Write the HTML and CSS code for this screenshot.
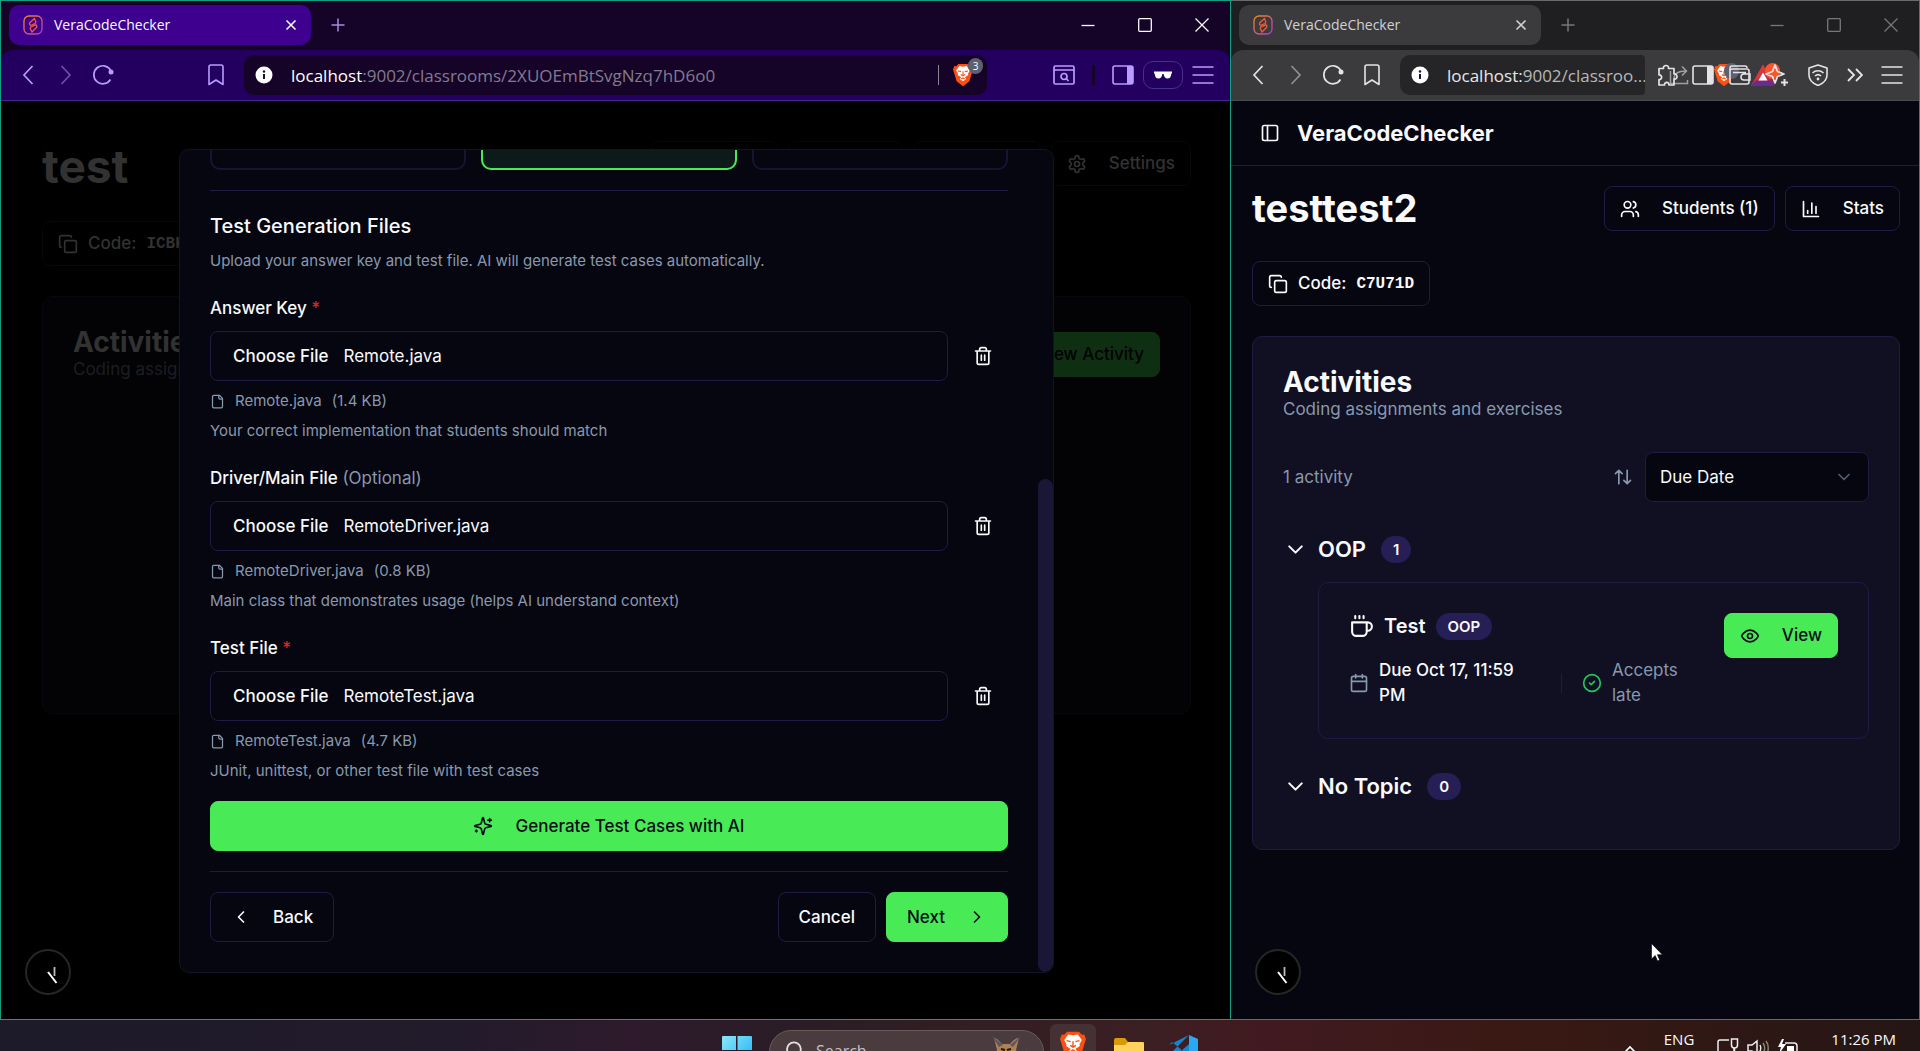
FILE: index.html
```html
<!DOCTYPE html>
<html lang="en">
<head>
<meta charset="utf-8">
<title>VeraCodeChecker</title>
<link rel="stylesheet" href="styles.css">
</head>
<body>
<svg class="sprite" aria-hidden="true">
  <defs>
    <linearGradient id="fav" x1="0" y1="0" x2="1" y2="1"><stop offset="0" stop-color="#f08a1c"/><stop offset="1" stop-color="#b33ad0"/></linearGradient>
    <linearGradient id="win" x1="0" y1="0" x2="1" y2="1"><stop offset="0" stop-color="#8be6fb"/><stop offset="1" stop-color="#18b0f2"/></linearGradient>
    <linearGradient id="bat" x1="0" y1="0" x2="1" y2="1"><stop offset="0" stop-color="#ff4724"/><stop offset="1" stop-color="#9e1f63"/></linearGradient>
  </defs>
  <symbol id="i-fav" viewBox="0 0 20 20"><rect x="1" y="1" width="18" height="18" rx="5" fill="none" stroke="url(#fav)" stroke-width="1.3"/><path d="M11.500 3.500 7 7.500c-1 1-.5 2.500.5 3L12 8.500c1-.7 1-2 .4-2.600zM9 17l4.500-4.500c.8-1 .2-2.300-.7-2.700L8 12c-1 .8-.8 2-.2 2.600z" fill="none" stroke="#ee5a3a" stroke-width="1.300"/></symbol>
  <symbol id="i-x" viewBox="0 0 12 12"><path d="m1.500 1.500 9 9m0-9-9 9" fill="none" stroke="currentColor" stroke-width="1.600"/></symbol>
  <symbol id="i-xthin" viewBox="0 0 14 14"><path d="m.5.5 13 13m0-13-13 13" fill="none" stroke="currentColor" stroke-width="1.300"/></symbol>
  <symbol id="i-plus" viewBox="0 0 14 14"><path d="M7 .5v13M.5 7h13" fill="none" stroke="currentColor" stroke-width="1.500"/></symbol>
  <symbol id="i-min" viewBox="0 0 14 14"><path d="M.5 7.500h13" fill="none" stroke="currentColor" stroke-width="1.300"/></symbol>
  <symbol id="i-max" viewBox="0 0 14 14"><rect x=".7" y=".7" width="12.600" height="12.600" rx="1" fill="none" stroke="currentColor" stroke-width="1.300"/></symbol>
  <symbol id="i-back" viewBox="0 0 12 20"><path d="M10.500 1 2 10l8.500 9" fill="none" stroke="currentColor" stroke-width="1.700"/></symbol>
  <symbol id="i-fwd" viewBox="0 0 12 20"><path d="M1.500 1 10 10l-8.500 9" fill="none" stroke="currentColor" stroke-width="1.700"/></symbol>
  <symbol id="i-reload" viewBox="0 0 22 22"><path d="M18.500 15.500A9 9 0 1 1 19 7" fill="none" stroke="currentColor" stroke-width="1.700"/><circle cx="19" cy="8" r="2.500" fill="currentColor"/></symbol>
  <symbol id="i-mark" viewBox="0 0 16 22"><path d="M1 3a2 2 0 0 1 2-2h10a2 2 0 0 1 2 2v17.500L8 16l-7 4.500z" fill="none" stroke="currentColor" stroke-width="1.600" stroke-linejoin="round"/></symbol>
  <symbol id="i-info" viewBox="0 0 18 18"><circle cx="9" cy="9" r="8.500" fill="currentColor"/><path d="M9 8v5" stroke="#1a1030" stroke-width="2"/><circle cx="9" cy="5.500" r="1.200" fill="#1a1030"/></symbol>
  <symbol id="i-brave" viewBox="0 0 22 26"><path d="M6 1h10l2.500 2.500 2-.3L22 7l-1 3-3 10-7 5.500L4 20 1 10 0 7l1.500-3.800 2 .3z" fill="#fb5014"/><path d="m11 4 4-.8L18.500 8l-2 3.500.3 1.500-3.800 2.500 1.500 2L11 20l-3.500-2.500 1.500-2L5.200 13l.3-1.500L3.500 8 7 3.200z" fill="#fff"/><path d="m5.500 8.500 3.500.8M16.500 8.500 13 9.300M11 9v5m-2.500-1.500L11 14l2.500-1.500M9 17.500l2-1.200 2 1.200" fill="none" stroke="#fb5014" stroke-width="1.200"/></symbol>
  <symbol id="i-lookup" viewBox="0 0 22 20"><rect x="1" y="1" width="20" height="18" rx="1.500" fill="none" stroke="currentColor" stroke-width="1.700"/><path d="M1 5h20" stroke="currentColor" stroke-width="1.500"/><circle cx="11" cy="11.500" r="3" fill="none" stroke="currentColor" stroke-width="1.700"/><path d="m13 13.500 2.500 2.500" stroke="currentColor" stroke-width="1.700"/></symbol>
  <symbol id="i-side" viewBox="0 0 22 20"><rect x="1" y="1" width="20" height="18" rx="2" fill="none" stroke="currentColor" stroke-width="1.600"/><path d="M15 1h6v18h-6z" fill="currentColor"/></symbol>
  <symbol id="i-glasses" viewBox="0 0 20 8"><path d="M0 0h20v2l-.8.500C19 6 17.500 8 15 8c-2.500 0-4-2-4.300-5H9.300C9 6 7.500 8 5 8 2.500 8 1 6 .8 2.500L0 2z" fill="#fff"/></symbol>
  <symbol id="i-menu" viewBox="0 0 22 18"><path d="M.5 1h21m-21 8h21m-21 8h21" stroke="currentColor" stroke-width="1.700"/></symbol>
  <symbol id="i-puzzle" viewBox="0 0 22 22"><path d="M2 4.500h4.500C5.500.5 12.500.5 11.500 4.500H17v5.500c4-1 4 6 0 5v6h-5c.5-3.500-5-3.500-4.500 0H2v-5.500c3.500.5 3.500-5 0-4.500z" fill="none" stroke="currentColor" stroke-width="1.700" stroke-linejoin="round"/></symbol>
  <symbol id="i-share" viewBox="0 0 20 20"><path d="M1.500 6v12.500h17V15M5 14c0-6 4-8 12-8m-4-4.500L17.500 6 13 10.500" fill="none" stroke="currentColor" stroke-width="1.500"/></symbol>
  <symbol id="i-wallet" viewBox="0 0 22 20"><rect x="1" y="4" width="19" height="15" rx="2" fill="none" stroke="currentColor" stroke-width="1.600"/><path d="M1 5V3a2 2 0 0 1 2-2h13a2 2 0 0 1 2 2M4 7.500h13M21 9h-6a3 3 0 0 0 0 6h6z" fill="none" stroke="currentColor" stroke-width="1.500"/></symbol>
  <symbol id="i-bat" viewBox="0 0 24 21"><path d="M12 0 24 21H0z" fill="url(#bat)"/><path d="M0 21h24l-4.500-5h-15z" fill="#662d91"/><path d="m12 8 4.500 8h-9z" fill="#fff"/></symbol>
  <symbol id="i-leo" viewBox="0 0 24 24"><path d="m10 2 2.500 6.500L19 11l-6.500 2.500L10 20l-2.500-6.500L1 11l6.500-2.500z" fill="none" stroke="currentColor" stroke-width="1.800" stroke-linejoin="round"/><path d="M19.500 16v7M16 19.500h7" stroke="currentColor" stroke-width="2"/></symbol>
  <symbol id="i-vpn" viewBox="0 0 20 22"><path d="m10 1 9 3v7c0 5-4 8.500-9 10.500C5 19.500 1 16 1 11V4z" fill="none" stroke="currentColor" stroke-width="1.600" stroke-linejoin="round"/><path d="M4.500 9c3-3 8-3 11 0M7 12c2-1.800 4-1.800 6 0" fill="none" stroke="currentColor" stroke-width="1.500"/><circle cx="10" cy="15" r="1.400" fill="currentColor"/></symbol>
  <symbol id="i-more" viewBox="0 0 16 14"><path d="m1 1 6 6-6 6M9 1l6 6-6 6" fill="none" stroke="currentColor" stroke-width="1.800"/></symbol>
  <symbol id="i-copy" viewBox="0 0 24 24"><rect width="14" height="14" x="8" y="8" rx="2"/><path d="M4 16c-1.100 0-2-.9-2-2V4c0-1.100.9-2 2-2h10c1.100 0 2 .9 2 2"/></symbol>
  <symbol id="i-gear" viewBox="0 0 24 24"><path d="M12.220 2h-.44a2 2 0 0 0-2 2v.18a2 2 0 0 1-1 1.730l-.43.25a2 2 0 0 1-2 0l-.15-.08a2 2 0 0 0-2.730.73l-.22.38a2 2 0 0 0 .73 2.730l.15.1a2 2 0 0 1 1 1.720v.51a2 2 0 0 1-1 1.740l-.15.09a2 2 0 0 0-.73 2.730l.22.38a2 2 0 0 0 2.730.73l.15-.08a2 2 0 0 1 2 0l.43.25a2 2 0 0 1 1 1.730V20a2 2 0 0 0 2 2h.44a2 2 0 0 0 2-2v-.18a2 2 0 0 1 1-1.730l.43-.25a2 2 0 0 1 2 0l.15.08a2 2 0 0 0 2.730-.73l.22-.39a2 2 0 0 0-.73-2.730l-.15-.08a2 2 0 0 1-1-1.740v-.5a2 2 0 0 1 1-1.740l.15-.09a2 2 0 0 0 .73-2.730l-.22-.38a2 2 0 0 0-2.730-.73l-.15.08a2 2 0 0 1-2 0l-.43-.25a2 2 0 0 1-1-1.730V4a2 2 0 0 0-2-2z"/><circle cx="12" cy="12" r="3"/></symbol>
  <symbol id="i-trash" viewBox="0 0 24 24"><path d="M3 6h18M19 6v14c0 1-1 2-2 2H7c-1 0-2-1-2-2V6M8 6V4c0-1 1-2 2-2h4c1 0 2 1 2 2v2M10 11v6M14 11v6"/></symbol>
  <symbol id="i-file" viewBox="0 0 24 24"><path d="M15 2H6a2 2 0 0 0-2 2v16a2 2 0 0 0 2 2h12a2 2 0 0 0 2-2V7Z"/><path d="M14 2v4a2 2 0 0 0 2 2h4"/></symbol>
  <symbol id="i-sparkles" viewBox="0 0 24 24"><path d="M9.937 15.500A2 2 0 0 0 8.500 14.063l-6.135-1.582a.5.5 0 0 1 0-.962L8.500 9.936A2 2 0 0 0 9.937 8.500l1.582-6.135a.5.5 0 0 1 .963 0L14.063 8.500A2 2 0 0 0 15.500 9.937l6.135 1.581a.5.5 0 0 1 0 .964L15.500 14.063a2 2 0 0 0-1.437 1.437l-1.582 6.135a.5.5 0 0 1-.963 0z"/><path d="M20 3v4M22 5h-4M4 17v2M5 18H3"/></symbol>
  <symbol id="i-left" viewBox="0 0 24 24"><path d="m15 18-6-6 6-6"/></symbol>
  <symbol id="i-right" viewBox="0 0 24 24"><path d="m9 18 6-6-6-6"/></symbol>
  <symbol id="i-down" viewBox="0 0 24 24"><path d="m6 9 6 6 6-6"/></symbol>
  <symbol id="i-panel" viewBox="0 0 24 24"><rect width="18" height="18" x="3" y="3" rx="2"/><path d="M9 3v18"/></symbol>
  <symbol id="i-users" viewBox="0 0 24 24"><path d="M16 21v-2a4 4 0 0 0-4-4H6a4 4 0 0 0-4 4v2"/><circle cx="9" cy="7" r="4"/><path d="M22 21v-2a4 4 0 0 0-3-3.870M16 3.130a4 4 0 0 1 0 7.750"/></symbol>
  <symbol id="i-chart" viewBox="0 0 24 24"><path d="M3 3v18h18M18 17V9M13 17V5M8 17v-3"/></symbol>
  <symbol id="i-sort" viewBox="0 0 24 24"><path d="m21 16-4 4-4-4M17 20V4M3 8l4-4 4 4M7 4v16"/></symbol>
  <symbol id="i-cup" viewBox="0 0 24 24"><path d="M17 8h1a4 4 0 1 1 0 8h-1M3 8h14v9a4 4 0 0 1-4 4H7a4 4 0 0 1-4-4ZM6 2v2M10 2v2M14 2v2"/></symbol>
  <symbol id="i-eye" viewBox="0 0 24 24"><path d="M2 12s3-7 10-7 10 7 10 7-3 7-10 7-10-7-10-7Z"/><circle cx="12" cy="12" r="3"/></symbol>
  <symbol id="i-cal" viewBox="0 0 24 24"><path d="M8 2v4M16 2v4"/><rect width="18" height="18" x="3" y="4" rx="2"/><path d="M3 10h18"/></symbol>
  <symbol id="i-ok" viewBox="0 0 24 24"><circle cx="12" cy="12" r="10"/><path d="m9 12 2 2 4-4"/></symbol>
  <symbol id="i-next" viewBox="0 0 46 46"><circle cx="23" cy="23" r="22" fill="#000" stroke="#262626" stroke-width="2"/><path d="m23 23 8.500 11" stroke="#fff" stroke-width="2"/><path d="M29.500 18v9" stroke="#bbb" stroke-width="1.800"/></symbol>
</svg>

<main class="desktop">
  <section class="window window-active">
    <header class="tabs">
      <div class="tab"><svg class="fav"><use href="#i-fav"/></svg><span>VeraCodeChecker</span><button class="ic tab-x" aria-label="Close tab"><svg class="s12"><use href="#i-x"/></svg></button></div>
      <button class="ic new-tab" aria-label="New tab"><svg class="s14"><use href="#i-plus"/></svg></button>
      <div class="controls">
        <button class="ic" aria-label="Minimize"><svg class="s14"><use href="#i-min"/></svg></button>
        <button class="ic" aria-label="Maximize"><svg class="s14"><use href="#i-max"/></svg></button>
        <button class="ic" aria-label="Close"><svg class="s14"><use href="#i-xthin"/></svg></button>
      </div>
    </header>
    <nav class="toolbar">
      <div class="nav-keys">
        <button class="ic" aria-label="Back"><svg class="arrow"><use href="#i-back"/></svg></button>
        <button class="ic faded" aria-label="Forward"><svg class="arrow"><use href="#i-fwd"/></svg></button>
      </div>
      <button class="ic" aria-label="Reload"><svg class="s22"><use href="#i-reload"/></svg></button>
      <button class="ic mark" aria-label="Bookmark"><svg class="s22"><use href="#i-mark"/></svg></button>
      <div class="url">
        <svg class="s18"><use href="#i-info"/></svg>
        <p><b>localhost</b>:9002/classrooms/2XUOEmBtSvgNzq7hD6o0</p>
        <span class="url-sep"></span>
        <span class="shield"><svg class="brave"><use href="#i-brave"/></svg><span class="count">3</span></span>
      </div>
      <div class="tools">
        <button class="ic" aria-label="Find in page"><svg class="s22"><use href="#i-lookup"/></svg></button>
        <span class="bar"></span>
        <button class="ic" aria-label="Side panel"><svg class="s22"><use href="#i-side"/></svg></button>
        <button class="ic private" aria-label="Private window"><svg class="glasses"><use href="#i-glasses"/></svg></button>
        <button class="ic" aria-label="Menu"><svg class="s22"><use href="#i-menu"/></svg></button>
      </div>
    </nav>
    <div class="page">
      <div class="behind">
        <div class="head">
          <h1 class="name-lg">test</h1>
          <div class="actions">
            <button class="btn ghost-a" aria-label="Students"></button>
            <button class="btn ghost-b" aria-label="Stats"></button>
            <button class="btn ghost-c" aria-label="Export"></button>
            <button class="btn"><svg class="lu"><use href="#i-gear"/></svg>Settings</button>
          </div>
        </div>
        <button class="btn code"><svg class="lu"><use href="#i-copy"/></svg>Code: <code>ICBK2F</code></button>
        <div class="panel">
          <div><h2>Activities</h2><p class="sub">Coding assignments</p></div>
          <button class="btn dim-green">New Activity</button>
        </div>
      </div>
      <div class="overlay">
        <div class="modal" role="dialog" aria-label="Test Generation Files">
          <div class="choices"><div class="choice"></div><div class="choice chosen"></div><div class="choice"></div></div>
          <hr>
          <h3>Test Generation Files</h3>
          <p class="note lead">Upload your answer key and test file. AI will generate test cases automatically.</p>
          <div class="field">
            <label for="f1">Answer Key <em>*</em></label>
            <div class="pick"><button id="f1" class="file"><span>Choose File</span>Remote.java</button><button class="ic bin" aria-label="Remove Remote.java"><svg class="lu"><use href="#i-trash"/></svg></button></div>
            <p class="note row"><svg class="lu-sm"><use href="#i-file"/></svg>Remote.java<span>(1.4 KB)</span></p>
            <p class="note">Your correct implementation that students should match</p>
          </div>
          <div class="field">
            <label for="f2">Driver/Main File <i>(Optional)</i></label>
            <div class="pick"><button id="f2" class="file"><span>Choose File</span>RemoteDriver.java</button><button class="ic bin" aria-label="Remove RemoteDriver.java"><svg class="lu"><use href="#i-trash"/></svg></button></div>
            <p class="note row"><svg class="lu-sm"><use href="#i-file"/></svg>RemoteDriver.java<span>(0.8 KB)</span></p>
            <p class="note">Main class that demonstrates usage (helps AI understand context)</p>
          </div>
          <div class="field">
            <label for="f3">Test File <em>*</em></label>
            <div class="pick"><button id="f3" class="file"><span>Choose File</span>RemoteTest.java</button><button class="ic bin" aria-label="Remove RemoteTest.java"><svg class="lu"><use href="#i-trash"/></svg></button></div>
            <p class="note row"><svg class="lu-sm"><use href="#i-file"/></svg>RemoteTest.java<span>(4.7 KB)</span></p>
            <p class="note">JUnit, unittest, or other test file with test cases</p>
          </div>
          <button class="btn tall green wide"><svg class="lu"><use href="#i-sparkles"/></svg>Generate Test Cases with AI</button>
          <hr>
          <div class="foot">
            <button class="btn tall"><svg class="lu"><use href="#i-left"/></svg>Back</button>
            <span class="grow"></span>
            <button class="btn tall">Cancel</button>
            <button class="btn tall green">Next<svg class="lu"><use href="#i-right"/></svg></button>
          </div>
          <span class="thumb"></span>
        </div>
      </div>
      <svg class="next"><use href="#i-next"/></svg>
    </div>
  </section>

  <section class="window window-idle">
    <header class="tabs">
      <div class="tab"><svg class="fav"><use href="#i-fav"/></svg><span>VeraCodeChecker</span><button class="ic tab-x" aria-label="Close tab"><svg class="s12"><use href="#i-x"/></svg></button></div>
      <button class="ic new-tab" aria-label="New tab"><svg class="s14"><use href="#i-plus"/></svg></button>
      <div class="controls">
        <button class="ic" aria-label="Minimize"><svg class="s14"><use href="#i-min"/></svg></button>
        <button class="ic" aria-label="Maximize"><svg class="s14"><use href="#i-max"/></svg></button>
        <button class="ic" aria-label="Close"><svg class="s14"><use href="#i-xthin"/></svg></button>
      </div>
    </header>
    <nav class="toolbar">
      <div class="nav-keys">
        <button class="ic" aria-label="Back"><svg class="arrow"><use href="#i-back"/></svg></button>
        <button class="ic faded" aria-label="Forward"><svg class="arrow"><use href="#i-fwd"/></svg></button>
      </div>
      <button class="ic" aria-label="Reload"><svg class="s22"><use href="#i-reload"/></svg></button>
      <button class="ic mark" aria-label="Bookmark"><svg class="s22"><use href="#i-mark"/></svg></button>
      <div class="url">
        <svg class="s18"><use href="#i-info"/></svg>
        <p><b>localhost:</b>9002/classroo...</p>
      </div>
      <div class="tools crowded">
        <svg class="s22"><use href="#i-puzzle"/></svg>
        <svg class="s20 over dim"><use href="#i-share"/></svg>
        <svg class="s22"><use href="#i-side"/></svg>
        <svg class="brave"><use href="#i-brave"/></svg>
        <span class="dot over"></span>
        <svg class="s22 over"><use href="#i-wallet"/></svg>
        <svg class="s24"><use href="#i-bat"/></svg>
        <span class="dot red over"></span>
        <svg class="s24 on-dot"><use href="#i-leo"/></svg>
        <svg class="s22 apart"><use href="#i-vpn"/></svg>
        <svg class="s16 apart"><use href="#i-more"/></svg>
        <svg class="s22 apart"><use href="#i-menu"/></svg>
      </div>
    </nav>
    <div class="page">
      <div class="appbar"><svg class="lu"><use href="#i-panel"/></svg><strong>VeraCodeChecker</strong></div>
      <div class="content">
        <div class="head">
          <h1>testtest2</h1>
          <div class="actions">
            <button class="btn"><svg class="lu"><use href="#i-users"/></svg>Students (1)</button>
            <button class="btn"><svg class="lu"><use href="#i-chart"/></svg>Stats</button>
          </div>
        </div>
        <button class="btn code"><svg class="lu"><use href="#i-copy"/></svg>Code: <code>C7U71D</code></button>
        <div class="card">
          <h2>Activities</h2>
          <p class="sub">Coding assignments and exercises</p>
          <div class="filter">
            <span>1 activity</span>
            <label for="sort" aria-label="Sort by"><svg class="lu"><use href="#i-sort"/></svg></label>
            <span class="select"><select id="sort"><option>Due Date</option></select><svg class="lu"><use href="#i-down"/></svg></span>
          </div>
          <div class="topic"><svg class="lu-lg"><use href="#i-down"/></svg><h3>OOP</h3><span class="badge">1</span></div>
          <article class="activity">
            <div class="info">
              <div class="title"><svg class="lu-lg"><use href="#i-cup"/></svg><h4>Test</h4><span class="badge">OOP</span></div>
              <div class="meta"><svg class="lu"><use href="#i-cal"/></svg><p class="due">Due Oct 17, 11:59 PM</p><span class="rule"></span><svg class="lu ok"><use href="#i-ok"/></svg><p class="late">Accepts late</p></div>
            </div>
            <button class="btn green"><svg class="lu"><use href="#i-eye"/></svg>View</button>
          </article>
          <div class="topic last"><svg class="lu-lg"><use href="#i-down"/></svg><h3>No Topic</h3><span class="badge">0</span></div>
        </div>
      </div>
      <svg class="next"><use href="#i-next"/></svg>
      <svg class="pointer" viewBox="0 0 12 19"><path d="M.5.5v15.500l3.700-3.500 2.300 5.500 2.200-1-2.300-5.300h5z" fill="#fff" stroke="#000" stroke-width=".6"/></svg>
    </div>
  </section>
</main>

<footer class="taskbar">
  <div class="apps">
    <svg class="start" viewBox="0 0 30 30"><path d="M0 1a1 1 0 0 1 1-1h13v14H0zM15.500 0H29a1 1 0 0 1 1 1v13H15.500zM0 15.500h14V30H0zM15.500 15.500H30V30H15.500z" fill="url(#win)"/></svg>
    <label class="search"><svg viewBox="0 0 24 24" class="s22"><circle cx="13" cy="10" r="7.500" fill="none" stroke="#e6e0e0" stroke-width="2"/><path d="m8 16-4 5" stroke="#e6e0e0" stroke-width="2"/></svg><input placeholder="Search" aria-label="Search">
      <svg class="lynx" viewBox="0 0 54 34"><path d="m3 34-2-16 6 16M8 34l1-10 3 10M42 34l6-18-2 18M50 34l3-14" stroke="#7d7a3a" stroke-width="1.500" fill="none"/><path d="M15 3c3 0 6 4 8 6h8c2-2 5-6 9-6l-3 12 3 10-3 5H18l-3-6 3-9z" fill="#b08050"/><path d="m13 1 7 11 4-2zM42 1l-8 11-3-2z" fill="#5a5668"/><path d="m22 14 4 1M32 14l-4 1" stroke="#22150c" stroke-width="2"/><path d="M23 19h8l-2 6h-4z" fill="#ead9c6"/></svg>
    </label>
    <span class="tile"><svg class="big"><use href="#i-brave"/></svg></span>
    <svg class="folder" viewBox="0 0 30 26"><path d="M0 3a2 2 0 0 1 2-2h9l3 4h16v10H0z" fill="#d99a07"/><path d="M0 8h11l3-3h14a2 2 0 0 1 2 2v19H0z" fill="#ffd35c"/></svg>
    <svg class="code-app" viewBox="0 0 30 30"><path d="m1 10 3-3 17 14V9L5 23l-4-3L21 0z" fill="#1484cc"/><path d="m21 0 9 4v22l-9 4z" fill="#29a9f2"/></svg>
  </div>
  <div class="tray">
    <svg class="up" viewBox="0 0 12 8"><path d="m1 7 5-5 5 5" fill="none" stroke="#fff" stroke-width="1.600"/></svg>
    <span class="lang">ENG</span>
    <svg class="s22" viewBox="0 0 22 22"><path d="M12 3H3a2 2 0 0 0-2 2v9a2 2 0 0 0 2 2h14v-5M6 20h9" fill="none" stroke="#eee" stroke-width="1.500"/><path d="M14.500 2h6v6a3 3 0 0 1-6 0zM17.500 11v4" fill="none" stroke="#eee" stroke-width="1.500"/></svg>
    <svg class="s22" viewBox="0 0 22 22"><path d="M1 8h4l5-4v14l-5-4H1z" fill="none" stroke="#eee" stroke-width="1.500"/><path d="M13 8c1 2 1 4 0 6" stroke="#eee" fill="none" stroke-width="1.400"/><path d="M16 6c2 3 2 7 0 10m3-12c3 4 3 10 0 14" stroke="#887" fill="none" stroke-width="1.400"/></svg>
    <svg class="s22" viewBox="0 0 22 22"><path d="M8 6h9a3 3 0 0 1 3 3v4a3 3 0 0 1-3 3H8" fill="none" stroke="#eee" stroke-width="1.500"/><path d="M10 9h7v5h-7zM5 2 1 10h3l-2 7 7-10H5l2-5z" fill="#fff"/></svg>
    <time>11:26 PM</time>
  </div>
</footer>
</body>
</html>
```
FILE: styles.css
```css
* { box-sizing: border-box; }
html, body { height: 100%; }
body {
  margin: 0;
  display: flex;
  flex-direction: column;
  overflow: hidden;
  background: #000;
  color: #f8fafc;
  font: 17px/25px Inter, "Liberation Sans", sans-serif;
}
h1, h2, h3, h4, p { margin: 0; }
button, input, select { font: inherit; color: inherit; margin: 0; }
svg { flex: none; display: block; }
.sprite { position: absolute; width: 0; height: 0; }

.lu, .lu-sm, .lu-lg { width: 20px; height: 20px; fill: none; stroke: currentColor; stroke-width: 2; stroke-linecap: round; stroke-linejoin: round; }
.lu-sm { width: 15px; height: 15px; }
.lu-lg { width: 25px; height: 25px; }
.s12 { width: 12px; height: 12px; }
.s14 { width: 14px; height: 14px; }
.s16 { width: 16px; height: 16px; }
.s18 { width: 18px; height: 18px; }
.s20 { width: 20px; height: 20px; }
.s22 { width: 22px; height: 22px; }
.s24 { width: 24px; height: 24px; }
.arrow { width: 12px; height: 20px; }
.brave { width: 20px; height: 24px; }
.ic { border: 0; padding: 0; background: none; display: grid; place-items: center; }

/* windows */
.desktop { flex: 1; min-height: 0; display: grid; grid-template-columns: 1231fr 689fr; }
.window { display: flex; flex-direction: column; min-width: 0; border: 1px solid #6a6a6a; }
.window-active { border-color: #12a083; background: #150427; color: #f8fafc; }
.window-idle { border-left: 0; background: #1f1f21; }
.tabs { height: 49px; display: flex; align-items: center; padding: 0 0 2px 8px; font: 14px/20px "Open Sans", "Noto Sans", sans-serif; }
.tab { width: 302px; height: 40px; border-radius: 10px; display: flex; align-items: center; gap: 11px; padding: 0 14px; background: #3d008f; }
.tab-x { margin-left: auto; }
.fav { width: 20px; height: 20px; }
.new-tab { margin-left: 20px; color: #a78be0; }
.controls { margin-left: auto; display: flex; gap: 43px; padding-right: 21px; }
.window-idle .tab { background: #3b3b3e; color: #d0d0d2; }
.window-idle .new-tab, .window-idle .controls { color: #77777a; }
.toolbar { height: 51px; display: flex; align-items: center; padding: 0 16px 0 21px; background: #23005f; border-bottom: 1px solid #4a2590; border-radius: 12px 12px 0 0; color: #b89cff; gap: 20px; font-family: "Open Sans", "Noto Sans", sans-serif; }
.nav-keys { display: flex; gap: 26px; }
.faded { opacity: .5; }
.toolbar .mark { margin-left: 74px; }
.mark svg { width: 16px; }
.url { flex: 1; min-width: 0; height: 40px; background: #150427; border-radius: 10px; display: flex; align-items: center; gap: 18px; padding: 0 2px 0 11px; color: #fff; }
.url p { flex: 1; min-width: 0; color: #837a90; white-space: nowrap; overflow: hidden; }
.url b { color: #fff; font-weight: 400; }
.url-sep { width: 1px; height: 20px; background: #8a8494; }
.shield { position: relative; width: 32px; margin-left: -4px; }
.count { position: absolute; right: 2px; top: -5px; width: 15px; height: 16px; border-radius: 8px; background: #5c6070; font-size: 10px; line-height: 16px; text-align: center; }
.tools { display: flex; align-items: center; gap: 17px; padding-left: 46px; }
.tools .bar { width: 3px; height: 20px; background: #150427; }
.private { width: 40px; height: 28px; border: 1px solid #45308a; border-radius: 10px; margin: 0 -8px; }
.glasses { width: 18px; height: 8px; }
.window-idle .toolbar { background: #3b3b3e; border-color: #4a4a4d; color: #e4e4e6; }
.window-idle .toolbar .mark { margin-left: 0; }
.window-idle .url { background: #252528; padding-right: 0; border-radius: 10px 4px 4px 10px; }
.window-idle .url p { color: #b8b8ba; }
.window-idle .url b { color: #e8e8ea; }
.tools.crowded { gap: 0; padding-left: 0; margin-left: -8px; }
.crowded .over { margin-left: -10px; }
.crowded .on-dot { margin-left: -15px; }
.crowded .apart { margin-left: 18px; }
.crowded .dim { opacity: .6; margin-right: 3px; }
.dot { flex: none; width: 15px; height: 16px; border-radius: 8px; background: #5c6070; align-self: flex-start; }
.dot.red { background: #fb542b; }

/* page shared */
.page { position: relative; flex: 1; min-height: 0; background: #060610; overflow: hidden; }
.head { display: flex; align-items: flex-start; justify-content: space-between; }
.actions { display: flex; gap: 10px; }
h1 { font-size: 38px; line-height: 45px; font-weight: 700; }
h2 { font-size: 28px; line-height: 30px; font-weight: 700; }
.btn { height: 45px; padding: 0 15px; display: flex; align-items: center; justify-content: center; gap: 22px; border: 1px solid #1f1b42; border-radius: 8px; background: none; font-weight: 500; white-space: nowrap; }
.btn.tall { height: 50px; padding: 0 20px; }
.btn.green { background: #48eb56; border-color: #48eb56; color: #0b0b1a; }
.btn.code { gap: 10px; padding: 0 15px; }
code { font: 700 16px/20px "Liberation Mono", monospace; }
.sub { color: #8899ae; line-height: 25px; }
.next { position: absolute; left: 24px; bottom: 24px; width: 46px; height: 46px; }
.window-active .page { background: #000; }

/* dimmed page under the dialog */
.behind { padding: 40px 39px 0 41px; color: #323232; }
.behind .btn { border-color: #07070d; }
.behind .btn.code { margin-top: 30px; }
.name-lg { font-size: 46px; line-height: 50px; }
.ghost-a { width: 127px; }
.ghost-b { width: 115px; }
.ghost-c { width: 128px; }
.panel { margin-top: 30px; height: 418px; border: 1px solid #07070d; border-radius: 10px; background: #030305; display: flex; justify-content: space-between; align-items: flex-start; padding: 30px; }
.panel .sub { color: #1b1e23; }
.behind .dim-green { background: #0e2f12; border-color: #0e2f12; color: #020204; margin-top: 5px; }

.overlay { position: absolute; inset: 0; display: grid; place-items: center; padding: 2px 0 0 2px; }
.modal { position: relative; width: 100%; max-width: 875px; height: 90%; border: 1px solid #141226; border-radius: 10px; background: #060610; overflow: hidden; display: flex; flex-direction: column; justify-content: flex-end; padding: 30px 45px 30px 30px; }
.modal > * { flex: none; }
.choices { display: grid; grid-template-columns: repeat(3, 1fr); gap: 15px; }
.choice { height: 120px; border: 2px solid #171432; border-radius: 10px; }
.chosen { border-color: #48eb56; background: #0c1b1a; }
hr { width: 100%; height: 1px; margin: 20px 0; border: 0; background: #1f1b42; }
.modal h3 { font-size: 20px; line-height: 30px; font-weight: 500; }
.note { font-size: 15px; line-height: 20px; color: #8899ae; }
.lead { margin-top: 10px; }
.row { display: flex; align-items: center; gap: 10px; }
.field { margin-top: 25px; display: flex; flex-direction: column; gap: 10px; }
label { font-weight: 500; }
label em { color: #dc2626; font-style: normal; }
label i { color: #8899ae; font-style: normal; font-weight: 400; }
.pick { display: flex; align-items: center; gap: 10px; }
.file { flex: 1; height: 50px; text-align: left; border: 1px solid #1f1b42; border-radius: 8px; background: none; padding: 0 22px; display: flex; align-items: center; gap: 15px; }
.file span { font-weight: 500; }
.bin { width: 50px; height: 50px; }
.wide { margin-top: 20px; }
.foot { display: flex; gap: 10px; }
.grow { flex: 1; }
.thumb { position: absolute; right: 0; bottom: 0; width: 15px; height: 60%; border-radius: 8px; background: #1a1736; }

/* idle window content */
.appbar { height: 65px; border-bottom: 1px solid #1f1b42; display: flex; align-items: center; gap: 17px; padding-left: 29px; }
.appbar strong { font-size: 22px; font-weight: 700; }
.content { padding: 20px 19px 0 21px; }
.content .code { margin-top: 30px; }
.card { margin-top: 30px; border: 1px solid #1f1b42; border-radius: 10px; background: #110f22; padding: 30px; }
.filter { display: flex; align-items: center; margin-top: 30px; gap: 12px; color: #8899ae; }
.filter > span:first-child { flex: 1; }
.select { position: relative; width: 224px; }
.select select { appearance: none; width: 100%; height: 50px; padding: 0 14px; border: 1px solid #1f1b42; border-radius: 8px; background: #060610; color: #f8fafc; }
.select .lu { position: absolute; right: 15px; top: 15px; opacity: .6; }
.topic { display: flex; align-items: center; gap: 10px; margin-top: 30px; height: 35px; }
.topic h3 { font-size: 22px; font-weight: 600; }
.badge { margin-left: 5px; background: #251f55; border-radius: 14px; padding: 0 12px; line-height: 27px; font-size: 15px; font-weight: 600; }
.activity { margin: 15px 0 0 35px; border: 1px solid #1f1b42; border-radius: 10px; padding: 30px; display: flex; justify-content: space-between; align-items: flex-start; min-height: 157px; }
.title, .meta { display: flex; align-items: center; gap: 10px; }
.title h4 { font-size: 20px; font-weight: 600; }
.title .badge { margin-left: 0; }
.meta { margin-top: 18px; color: #8899ae; }
.due { width: 162px; color: #f8fafc; font-weight: 500; }
.late { width: 80px; }
.rule { width: 1px; height: 20px; background: #1f1b42; margin: 0 10px; }
.ok { color: #22c55e; }
.topic.last { margin-bottom: 15px; }
.pointer { position: absolute; left: 61%; bottom: 57px; width: 12px; height: 19px; }

/* taskbar */
.taskbar { position: relative; flex: none; height: 31px; overflow: hidden; background: linear-gradient(90deg, #1d1a29 0, #221b2b 24%, #2e1a2c 33%, #2a1d26 42%, #3b1f22 60%, #411a20 66%, #391913 80%, #241615 100%); font-family: "Open Sans", "Noto Sans", sans-serif; }
.apps { display: flex; justify-content: center; align-items: flex-start; padding-top: 10px; }
.start { width: 30px; height: 30px; margin: 6px 17px 0 0; }
.search { width: 275px; height: 44px; border: 1px solid #6a5a5c; border-radius: 22px; background: #4a3c3e; display: flex; gap: 12px; padding: 9px 10px 0 12px; }
.search input { flex: 1; min-width: 0; height: 22px; border: 0; padding: 0; background: none; font-size: 16px; }
.search input::placeholder { color: #c9bfc0; opacity: 1; }
.lynx { width: 54px; height: 34px; margin-top: -5px; }
.tile { width: 46px; height: 44px; margin: -6px 18px 0 6px; border-radius: 6px; background: #453133; display: grid; place-items: center; }
.big { width: 26px; height: 32px; }
.folder { width: 30px; height: 26px; margin: 7px 24px 0 0; }
.code-app { width: 30px; height: 30px; margin-top: 5px; }
.tray { position: absolute; right: 24px; top: 7px; display: flex; gap: 8px; font-size: 15px; line-height: 24px; }
.up { width: 12px; height: 8px; margin: 18px 20px 0 0; }
.lang { margin-right: 15px; }
.tray .s22 { margin-top: 10px; }
.tray time { margin-left: 24px; }
```
